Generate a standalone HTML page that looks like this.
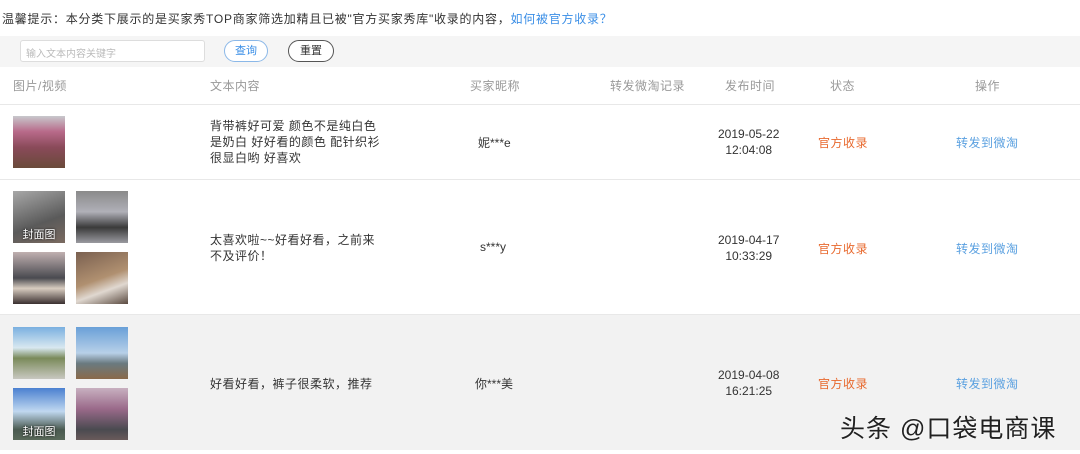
<!DOCTYPE html>
<html><head><meta charset="utf-8"><style>
*{margin:0;padding:0;box-sizing:border-box}
body{width:1080px;height:454px;background:#fff;font-family:"Liberation Sans","Noto Sans CJK SC",sans-serif;font-size:12px;color:#333;position:relative;overflow:hidden}
.a{position:absolute;white-space:nowrap}
.th{position:absolute;width:52px;height:52px}
.lbl{position:absolute;bottom:1px;left:0;width:52px;text-align:center;color:#fff;font-size:11px;text-shadow:0 0 2px #000}
.c{text-align:center;line-height:16px}
.hd{color:#999;font-size:12px}
.or{color:#e8692e}
.bl{color:#5aa0e0}
.t{letter-spacing:0.5px}
</style></head><body>
<div class="a" style="left:2px;top:10px;font-size:12px;color:#333;letter-spacing:0.75px">温馨提示：本分类下展示的是买家秀TOP商家筛选加精且已被"官方买家秀库"收录的内容，<span style="color:#3a8ee6">如何被官方收录？</span></div>
<div class="a" style="left:0;top:36px;width:1080px;height:31px;background:#f5f5f5"></div>
<div class="a" style="left:20px;top:40px;width:185px;height:22px;background:#fff;border:1px solid #ddd;border-radius:3px;font-size:10px;color:#bbb;padding:4px 5px">输入文本内容关键字</div>
<div class="a" style="left:224px;top:40px;width:44px;height:22px;border:1px solid #8bb8e8;border-radius:11px;text-align:center;line-height:20px;font-size:11px;color:#3a8ee6;background:#fff">查询</div>
<div class="a" style="left:288px;top:40px;width:46px;height:22px;border:1px solid #555;border-radius:11px;text-align:center;line-height:20px;font-size:11px;color:#333;background:#fff">重置</div>
<div class="a hd t" style="left:13px;top:77px">图片/视频</div>
<div class="a hd t" style="left:210px;top:77px">文本内容</div>
<div class="a hd t" style="left:470px;top:77px">买家昵称</div>
<div class="a hd t" style="left:610px;top:77px">转发微淘记录</div>
<div class="a hd t" style="left:725px;top:77px">发布时间</div>
<div class="a hd t" style="left:830px;top:77px">状态</div>
<div class="a hd t" style="left:975px;top:77px">操作</div>
<div class="a" style="left:0;top:104px;width:1080px;height:1px;background:#e8e8e8"></div>
<!-- row1 -->
<div class="th" style="left:13px;top:116px;background:linear-gradient(180deg,#c8c8cc 0%,#b86a8a 30%,#8a4a5a 60%,#6a4a3a 100%)"></div>
<div class="a t" style="left:210px;top:118px;line-height:16px">背带裤好可爱 颜色不是纯白色<br>是奶白 好好看的颜色 配针织衫<br>很显白哟 好喜欢</div>
<div class="a" style="left:478px;top:134px">妮***e</div>
<div class="a c" style="left:718px;top:126px">2019-05-22<br>12:04:08</div>
<div class="a or t" style="left:818px;top:134px">官方收录</div>
<div class="a bl t" style="left:956px;top:134px">转发到微淘</div>
<div class="a" style="left:0;top:179px;width:1080px;height:1px;background:#e8e8e8"></div>
<!-- row2 -->
<div class="th" style="left:13px;top:191px;background:linear-gradient(160deg,#a8a8a8,#5a5a5a 60%,#7a6a60)"><div class="lbl">封面图</div></div>
<div class="th" style="left:76px;top:191px;background:linear-gradient(180deg,#8a8a8a,#b0b0b8 40%,#3a3a3a 70%,#9a9aa0)"></div>
<div class="th" style="left:13px;top:252px;background:linear-gradient(180deg,#c0b0b0,#4a4a50 50%,#d8ccc0 70%,#3a3030)"></div>
<div class="th" style="left:76px;top:252px;background:linear-gradient(160deg,#7a6050,#b09070 50%,#e0d8d0 70%,#5a4a40)"></div>
<div class="a t" style="left:210px;top:232px;line-height:16px">太喜欢啦~~好看好看，之前来<br>不及评价！</div>
<div class="a" style="left:480px;top:240px">s***y</div>
<div class="a c" style="left:718px;top:232px">2019-04-17<br>10:33:29</div>
<div class="a or t" style="left:818px;top:240px">官方收录</div>
<div class="a bl t" style="left:956px;top:240px">转发到微淘</div>
<!-- row3 -->
<div class="a" style="left:0;top:314px;width:1080px;height:136px;background:#f2f2f2;border-top:1px solid #e8e8e8"></div>
<div class="th" style="left:13px;top:327px;background:linear-gradient(180deg,#7ab0e0,#d8e8f0 40%,#7a8a5a 60%,#c8c8c0)"></div>
<div class="th" style="left:76px;top:327px;background:linear-gradient(180deg,#6aa0d8,#b8d0e8 50%,#6a7a80 70%,#8a6a4a)"></div>
<div class="th" style="left:13px;top:388px;background:linear-gradient(180deg,#4a80d0,#c0d8f0 45%,#4a5a50 80%,#5a6a5a)"><div class="lbl">封面图</div></div>
<div class="th" style="left:76px;top:388px;background:linear-gradient(180deg,#c8b0c0,#9a6a8a 40%,#4a4a50 80%,#6a5a5a)"></div>
<div class="a t" style="left:210px;top:375px">好看好看，裤子很柔软，推荐</div>
<div class="a" style="left:475px;top:375px">你***美</div>
<div class="a c" style="left:718px;top:367px">2019-04-08<br>16:21:25</div>
<div class="a or t" style="left:818px;top:375px">官方收录</div>
<div class="a bl t" style="left:956px;top:375px">转发到微淘</div>
<div class="a" style="left:840px;top:409px;font-size:25px;letter-spacing:1px;color:#222;text-shadow:0 0 2px #fff">头条 @口袋电商课</div>
</body></html>
